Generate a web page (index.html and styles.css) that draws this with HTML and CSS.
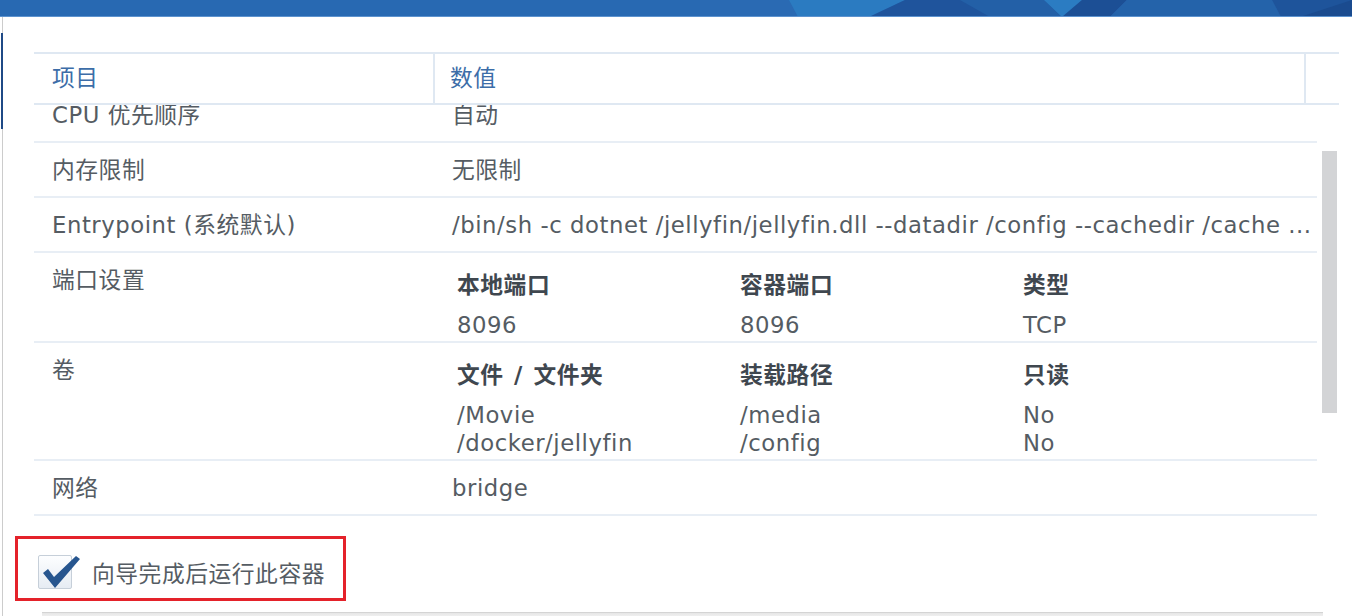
FILE: index.html
```html
<!DOCTYPE html>
<html lang="zh-CN">
<head>
<meta charset="utf-8">
<title>摘要</title>
<link rel="stylesheet" href="styles.css">
</head>
<body>
<div class="banner">
  <svg class="banner-art" width="1352" height="17" viewBox="0 0 1352 17" preserveAspectRatio="none">
    <rect x="0" y="0" width="1352" height="17" fill="#2869b2"/>
    <polygon points="700,0 789,0 798,17 700,17" fill="#2a6ab3"/>
    <polygon points="789,0 905,0 869,17 798,17" fill="#2b7bc1"/>
    <polygon points="905,0 1044,0 1062,17 869,17" fill="#1f549c"/>
    <polygon points="960,0 1044,0 1062,17 990,17" fill="#2360a7"/>
    <polygon points="1044,0 1082,0 1062,17" fill="#2b7cc2"/>
    <polygon points="1082,0 1127,0 1110,17 1062,17" fill="#1c4f95"/>
    <polygon points="1127,0 1272,0 1281,17 1110,17" fill="#2463aa"/>
    <polygon points="1272,0 1352,0 1352,17 1281,17" fill="#1e549b"/>
    <polygon points="1352,0 1352,17 1300,17" fill="#1a4b8f"/>
    <rect x="0" y="16" width="1352" height="1" fill="#5d93cf"/>
  </svg>
</div>
<div class="frame">
  <div class="summary">
    <div class="thead">
      <div class="th th-key">项目</div>
      <div class="th th-val">数值</div>
      <div class="th th-end"></div>
    </div>
    <div class="tbody-wrap">
      <div class="tbody">
        <div class="row">
          <div class="key">CPU 优先顺序</div>
          <div class="val">自动</div>
        </div>
        <div class="row">
          <div class="key">内存限制</div>
          <div class="val">无限制</div>
        </div>
        <div class="row">
          <div class="key">Entrypoint (系统默认)</div>
          <div class="val val-clip">/bin/sh -c dotnet /jellyfin/jellyfin.dll --datadir /config --cachedir /cache ...</div>
        </div>
        <div class="row">
          <div class="key">端口设置</div>
          <div class="val val-grid">
            <div class="sub">
              <div class="sub-h">本地端口</div>
              <div class="sub-h">容器端口</div>
              <div class="sub-h">类型</div>
              <div>8096</div>
              <div>8096</div>
              <div>TCP</div>
            </div>
          </div>
        </div>
        <div class="row">
          <div class="key">卷</div>
          <div class="val val-grid">
            <div class="sub">
              <div class="sub-h">文件 / 文件夹</div>
              <div class="sub-h">装载路径</div>
              <div class="sub-h">只读</div>
              <div>/Movie</div>
              <div>/media</div>
              <div>No</div>
              <div>/docker/jellyfin</div>
              <div>/config</div>
              <div>No</div>
            </div>
          </div>
        </div>
        <div class="row">
          <div class="key">网络</div>
          <div class="val">bridge</div>
        </div>
      </div>
      <div class="scrollbar"><div class="thumb"></div></div>
    </div>
  </div>
  <div class="run-opt">
    <span class="checkbox">
      <svg class="check" width="42" height="36" viewBox="0 0 42 36">
        <path d="M3 17 L8 13 L14 21 L36 0 L40 3 L15 32 Z" fill="#27568f"/>
      </svg>
    </span>
    <span class="run-label">向导完成后运行此容器</span>
  </div>
  <div class="footer-bar"></div>
</div>
</body>
</html>
```
FILE: styles.css
```css
html, body {
  margin: 0;
  padding: 0;
  background: #ffffff;
}
body {
  width: 1352px;
  height: 616px;
  overflow: hidden;
  font-family: "DejaVu Sans", "Noto Sans CJK SC", sans-serif;
  font-size: 22.75px;
  letter-spacing: 0.55px;
  color: #555c63;
}
.banner {
  height: 17px;
  overflow: hidden;
}
.banner-art {
  display: block;
}
.frame {
  position: relative;
  margin-left: 2px;
  border-left: 1px solid #cccccc;
  height: 599px;
  padding-top: 35px;
  box-sizing: border-box;
}
.frame::before {
  content: "";
  position: absolute;
  left: -2px;
  top: 16px;
  width: 2px;
  height: 96px;
  background: #1f4a86;
}
.summary {
  margin-left: 31px;
  width: 1305px;
}
.thead {
  display: flex;
  border-top: 2px solid #dfe8f2;
  border-bottom: 2px solid #dfe8f2;
  height: 49px;
}
.th {
  line-height: 49px;
  color: #3c6da8;
  box-sizing: border-box;
}
.th-key {
  width: 401px;
  padding-left: 18px;
  border-right: 2px solid #dfe8f2;
}
.th-val {
  width: 871px;
  padding-left: 15px;
  border-right: 2px solid #dfe8f2;
}
.th-end {
  flex: 1;
}
.tbody-wrap {
  display: flex;
  height: 415px;
  overflow: hidden;
}
.tbody {
  width: 1283px;
  margin-top: -17px;
}
.row {
  display: flex;
  border-bottom: 2px solid #e8eef5;
  line-height: 28px;
}
.key {
  width: 401px;
  flex: none;
  box-sizing: border-box;
  padding: 13px 0 12px 18px;
}
.val {
  flex: 1;
  min-width: 0;
  padding: 13px 4px 12px 17px;
}
.val-clip {
  white-space: nowrap;
  overflow: hidden;
}
.val-grid {
  padding: 18px 0 2px 22px;
}
.sub {
  display: grid;
  grid-template-columns: 283px 283px 283px;
}
.sub-h {
  font-weight: 700;
  color: #3f474f;
  margin-bottom: 12px;
  word-spacing: 2px;
}
.scrollbar {
  flex: 1;
  padding-left: 5px;
}
.thumb {
  margin-top: 46px;
  width: 15px;
  height: 262px;
  background: #d3d4d6;
}
.run-opt {
  display: flex;
  align-items: center;
  box-sizing: border-box;
  width: 331px;
  height: 65px;
  margin: 16px 0 0 12px;
  padding: 7px 0 0 20px;
  border: 3px solid #e4222a;
}
.checkbox {
  position: relative;
  width: 32px;
  height: 32px;
  border: 1px solid #c6cfd9;
  border-radius: 2px;
  background: linear-gradient(#fdfeff, #e6ecf3);
  flex: none;
}
.check {
  position: absolute;
  left: 1px;
  top: 0px;
  overflow: visible;
}
.run-label {
  margin-left: 20px;
  color: #555c63;
  white-space: nowrap;
}
.footer-bar {
  margin: 11px 0 0 39px;
  width: 1281px;
  height: 4px;
  border-top: 1px solid #d4d4d4;
  background: linear-gradient(#e6e6e6, #f2f2f2);
}
```
